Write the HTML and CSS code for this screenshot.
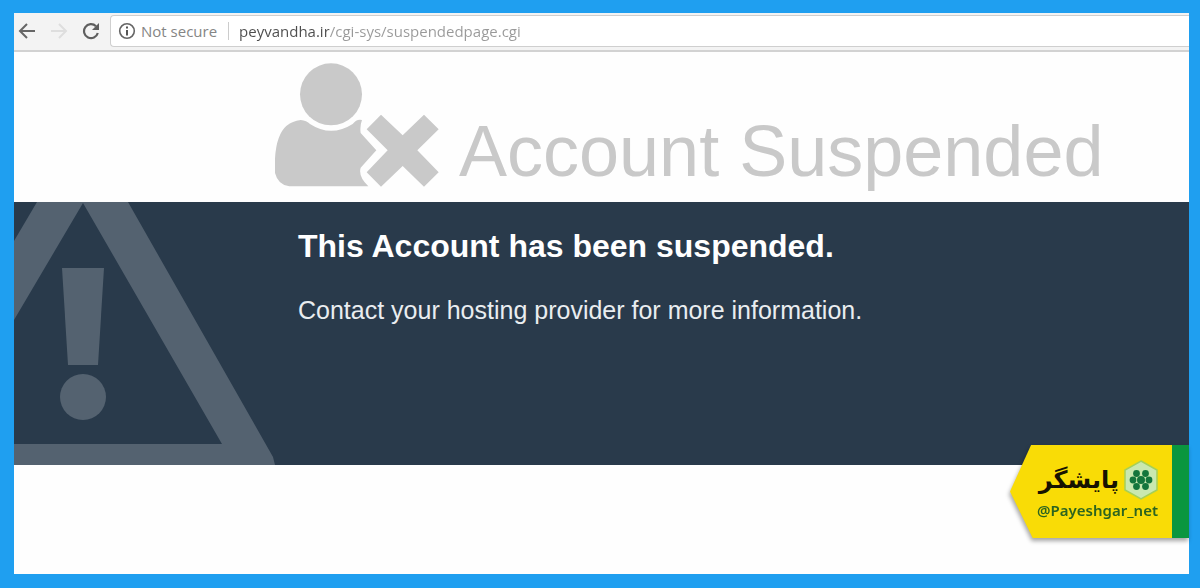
FILE: index.html
```html
<!DOCTYPE html>
<html lang="en">
<head>
<meta charset="utf-8">
<meta name="viewport" content="width=device-width, initial-scale=1">
<title>Account Suspended</title>
<link rel="stylesheet" href="styles.css">
</head>
<body>
<div class="window">
  <div class="toolbar">
    <button class="nav" type="button" aria-label="Back">
      <svg viewBox="0 0 18 18" width="18" height="18"><path d="M17 9H2M9 2L2 9l7 7" fill="none" stroke="#666" stroke-width="2"/></svg>
    </button>
    <button class="nav" type="button" aria-label="Forward" disabled>
      <svg viewBox="0 0 18 18" width="18" height="18"><path d="M1 9h15M9 2l7 7-7 7" fill="none" stroke="#dedede" stroke-width="2"/></svg>
    </button>
    <button class="nav" type="button" aria-label="Reload">
      <svg viewBox="0 0 18 18" width="18" height="18"><path d="M14 4.200A7 7 0 1 0 15.800 11" fill="none" stroke="#5f5f5f" stroke-width="2.200"/><path d="M17 1v7h-7z" fill="#5f5f5f"/></svg>
    </button>
    <div class="omnibox">
      <svg viewBox="0 0 18 18" width="18" height="18"><circle cx="9" cy="9" r="7.300" fill="none" stroke="#666" stroke-width="1.600"/><path d="M9 8v5.500M9 4.500v2" stroke="#555" stroke-width="2"/></svg>
      <label class="security" for="address">Not secure</label>
      <input class="address" id="address" type="text" value="peyvandha.ir/cgi-sys/suspendedpage.cgi" spellcheck="false">
    </div>
  </div>

  <header class="masthead">
    <svg class="user" viewBox="45 36 492 372" width="164" height="124" fill="#c9c9c9">
      <circle cx="213" cy="130" r="93"/>
      <path d="M122 207Q140 209 150 219Q213 260 278 219Q290 203 306 207Q299 225 302 246L349 298L302 350Q294 376 325 406H88Q54 402 45 366Q42 300 56 262Q72 213 122 207Z"/>
      <path d="M320 235L363 191L428 253L492 191L536 235L472 298L536 364L492 407L428 345L363 407L320 364L383 298Z"/>
    </svg>
    <h1 class="title">Account Suspended</h1>
  </header>

  <main class="notice">
    <svg class="warning" viewBox="0 0 261 263" width="261" height="263" fill="#546270" aria-hidden="true">
      <path fill-rule="evenodd" d="M23 0H114L259 255L261 263H0V242H208L69 1L0 118V39Z"/>
      <path d="M48 66H90L84 163H54Z"/>
      <circle cx="69" cy="195" r="23"/>
    </svg>
    <div class="message">
      <h2 class="headline">This Account has been suspended.</h2>
      <p class="detail">Contact your hosting provider for more information.</p>
    </div>
  </main>

  <aside class="badge">
    <div class="tag">
      <div class="brand">
        <span class="name" lang="fa" dir="rtl">پایشگر</span>
        <svg viewBox="0 0 34 40" width="34" height="40">
          <path d="M17 1L33 10V30L17 39L1 30V10Z" fill="#c9e8b0" stroke="#a5cf58" stroke-width="1.500"/>
          <g fill="#14763c"><circle cx="12.500" cy="13.500" r="3.400"/><circle cx="21.500" cy="13.500" r="3.400"/><circle cx="9" cy="20" r="3.400"/><circle cx="25" cy="20" r="3.400"/><circle cx="12.500" cy="26.500" r="3.400"/><circle cx="21.500" cy="26.500" r="3.400"/><circle cx="17" cy="20" r="4"/></g>
        </svg>
      </div>
      <a class="handle" href="#payeshgar">@Payeshgar_net</a>
    </div>
  </aside>
</div>
</body>
</html>
```
FILE: styles.css
```css
* {
  box-sizing: border-box;
}

body {
  margin: 0;
  min-height: 100vh;
  display: flex;
  padding: 13px 11px 14px 14px;
  background: #1f9ff0;
  font-family: "Liberation Sans", Arial, sans-serif;
}

.window {
  position: relative;
  flex: 1;
  min-width: 0;
  background: #fefefe;
}

.toolbar {
  display: flex;
  align-items: center;
  gap: 14px;
  height: 39px;
  padding: 2px 0 3px 4px;
  background: #f3f3f3;
  border-bottom: 2px solid #d2d2d2;
}

.nav {
  display: flex;
  padding: 0;
  border: 0;
  background: none;
}

.omnibox {
  display: flex;
  flex: 1;
  align-items: center;
  align-self: stretch;
  min-width: 0;
  margin-left: -4px;
  padding-left: 7px;
  background: #fff;
  border: 1px solid #cfcfcf;
  border-width: 1px 0 1px 1px;
  border-radius: 4px 0 0 4px;
  font: 15px "Open Sans", "Noto Sans", sans-serif;
}

.security {
  margin-left: 5px;
  padding-right: 11px;
  border-right: 1px solid #ccc;
  color: #858585;
  line-height: 18px;
}

.address {
  flex: 1;
  min-width: 0;
  padding: 0 0 0 10px;
  border: 0;
  outline: 0;
  background: linear-gradient(90deg, #4c4c4c 100px, #999 100px);
  background-clip: text;
  -webkit-background-clip: text;
  color: transparent;
  font: inherit;
}

.masthead {
  display: flex;
  align-items: flex-end;
  gap: 20px;
  height: 150px;
  padding: 0 20px 15px 261px;
}

.user {
  flex: none;
}

.title {
  margin: 0;
  color: #c9c9c9;
  font-size: 72px;
  font-weight: 400;
  line-height: 72px;
}

.notice {
  display: flex;
  gap: 23px;
  min-height: 263px;
  background: #293a4b;
  color: #fff;
}

.warning {
  flex: none;
}

.message {
  padding-top: 26px;
}

.headline {
  margin: 0;
  font-size: 32px;
  line-height: 36px;
}

.detail {
  margin: 30px 0 0;
  color: #e9edf0;
  font-size: 25px;
  line-height: 32px;
}

.badge {
  position: absolute;
  right: 0;
  bottom: 36px;
  border-right: 17px solid #0a963f;
  filter: drop-shadow(-1px 3px 2px rgba(0, 0, 0, 0.35));
}

.tag {
  display: flex;
  flex-direction: column;
  align-items: flex-end;
  width: 162px;
  height: 93px;
  padding: 15px 14px 0 0;
  background: #f9dc06;
  clip-path: polygon(13% 0, 100% 0, 100% 100%, 14% 100%, 0 50%);
}

.brand {
  display: flex;
  align-items: center;
  gap: 5px;
  height: 40px;
}

.name {
  color: #171200;
  font: bold 24px/40px "DejaVu Sans", sans-serif;
}

.handle {
  color: #2c6420;
  font: 600 15px/20px "Noto Sans", "Open Sans", sans-serif;
  text-decoration: none;
}
```
